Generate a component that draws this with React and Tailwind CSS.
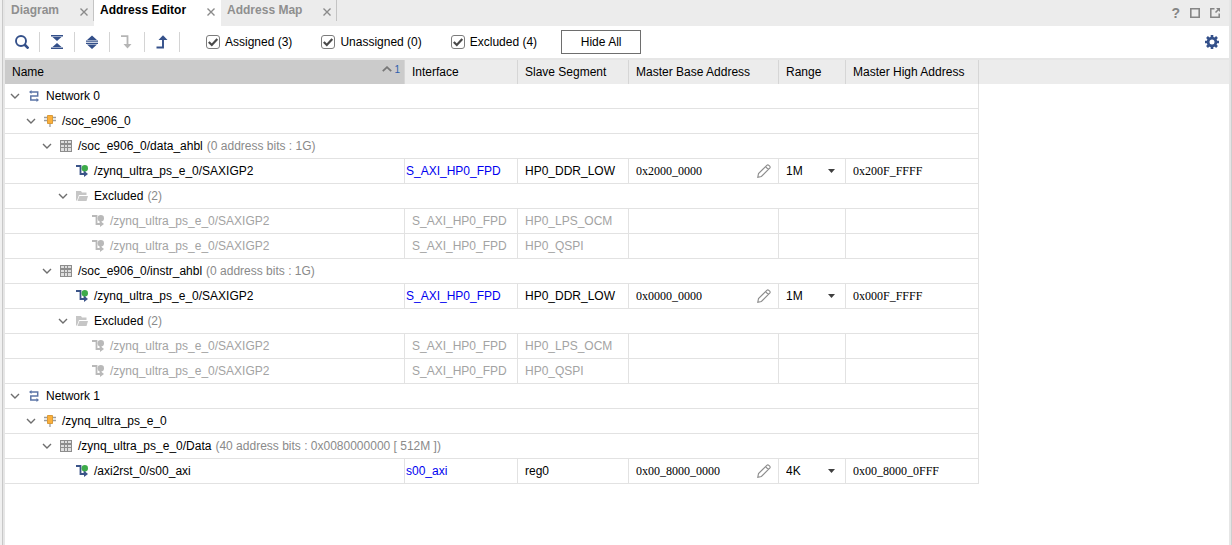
import { useState } from "react";

const PAD = ["pl-[5px]", "pl-[21px]", "pl-[37px]", "pl-[53px]", "pl-[69px]"];

const ROWS = [
  { level: 0, icon: "network", name: "Network 0", group: true },
  { level: 1, icon: "chip", name: "/soc_e906_0", group: true },
  { level: 2, icon: "grid", name: "/soc_e906_0/data_ahbl", note: "(0 address bits : 1G)", group: true },
  { level: 3, icon: "port", name: "/zynq_ultra_ps_e_0/SAXIGP2", iface: "S_AXI_HP0_FPD", seg: "HP0_DDR_LOW", base: "0x2000_0000", range: "1M", high: "0x200F_FFFF" },
  { level: 3, icon: "folder", name: "Excluded", note: "(2)", group: true },
  { level: 4, icon: "port", name: "/zynq_ultra_ps_e_0/SAXIGP2", iface: "S_AXI_HP0_FPD", seg: "HP0_LPS_OCM", excluded: true },
  { level: 4, icon: "port", name: "/zynq_ultra_ps_e_0/SAXIGP2", iface: "S_AXI_HP0_FPD", seg: "HP0_QSPI", excluded: true },
  { level: 2, icon: "grid", name: "/soc_e906_0/instr_ahbl", note: "(0 address bits : 1G)", group: true },
  { level: 3, icon: "port", name: "/zynq_ultra_ps_e_0/SAXIGP2", iface: "S_AXI_HP0_FPD", seg: "HP0_DDR_LOW", base: "0x0000_0000", range: "1M", high: "0x000F_FFFF" },
  { level: 3, icon: "folder", name: "Excluded", note: "(2)", group: true },
  { level: 4, icon: "port", name: "/zynq_ultra_ps_e_0/SAXIGP2", iface: "S_AXI_HP0_FPD", seg: "HP0_LPS_OCM", excluded: true },
  { level: 4, icon: "port", name: "/zynq_ultra_ps_e_0/SAXIGP2", iface: "S_AXI_HP0_FPD", seg: "HP0_QSPI", excluded: true },
  { level: 0, icon: "network", name: "Network 1", group: true },
  { level: 1, icon: "chip", name: "/zynq_ultra_ps_e_0", group: true },
  { level: 2, icon: "grid", name: "/zynq_ultra_ps_e_0/Data", note: "(40 address bits : 0x0080000000 [ 512M ])", group: true },
  { level: 3, icon: "port", name: "/axi2rst_0/s00_axi", iface: "s00_axi", seg: "reg0", base: "0x00_8000_0000", range: "4K", high: "0x00_8000_0FFF" },
];

function RowIcon({ kind, muted }) {
  const line = muted ? "#b9b9b9" : "#3a5388";
  return (
    <svg className="size-3 shrink-0" viewBox="0 0 12 12" fill="none" aria-hidden="true">
      {kind === "network" && (
        <g stroke="#5b74a6" strokeWidth="1.500">
          <path d="M2 2h7.700v4H2.800v4H9" />
          <path d="M3.500 0 1 2l2.500 2zM8.500 8l2.500 2-2.500 2z" fill="#5b74a6" stroke="none" />
        </g>
      )}
      {kind === "chip" && (
        <g>
          <path d="M0 2.500h12M0 5.500h12M6 8v4" stroke="#9c9c9c" strokeWidth="1.300" />
          <path d="M3.500.5h5v8h-5z" fill="#fbb03b" stroke="#d99a3a" />
        </g>
      )}
      {kind === "grid" && (
        <g>
          <path d="M0 0h12v12H0z" fill="#8d8d8d" />
          <path d="M1 1h3v2H1zM5 1h2v2H5zM8 1h3v2H8zM1 5h3v2H1zM5 5h2v2H5zM8 5h3v2H8zM1 8h3v3H1zM5 8h2v3H5zM8 8h3v3H8z" fill="#dedede" />
        </g>
      )}
      {kind === "port" && (
        <g>
          <path d="M0 1h4.500v8H10M8.500 5v4" stroke={line} strokeWidth="1.800" />
          <path d="M8 5.800 12 9l-4 3z" fill={line} />
          <circle cx="8.800" cy="3.200" r="3.200" fill={muted ? "#b9b9b9" : "#3dab49"} />
        </g>
      )}
      {kind === "folder" && (
        <g fill="#c6c6c6">
          <path d="M0 1h5l1 1.500h4.500V5H3L1 10.500H0z" />
          <path d="M3.400 6H12l-1.500 5H1.600z" />
        </g>
      )}
    </svg>
  );
}

function Chevron({ closed }) {
  return (
    <svg className={closed ? "size-[10px] -rotate-90" : "size-[10px]"} viewBox="0 0 10 10" fill="none" aria-hidden="true">
      <path d="m1 3 4 4 4-4" stroke="#6e6e6e" strokeWidth="1.400" />
    </svg>
  );
}

function Tab({ label, active }) {
  return (
    <div className={"flex items-start border-r pl-1.5 pr-[5px] " + (active ? "h-[26px] border-white bg-white" : "h-[21px] border-[#c4c4c4]")}>
      <button type="button" className={"h-5 font-bold " + (active ? "text-black" : "text-[#8f8f8f]")}>{label}</button>
      <button type="button" aria-label={"Close " + label} className="ml-[21px] mt-2 flex">
        <svg className="size-2" viewBox="0 0 8 8" aria-hidden="true">
          <path d="m.5.500 7 7m0-7-7 7" stroke="#8a8a8a" strokeWidth="1.400" />
        </svg>
      </button>
    </div>
  );
}

function Tool({ label, children, disabled }) {
  return (
    <button type="button" aria-label={label} disabled={disabled} className="flex h-5 w-[35px] items-center justify-center border-r border-[#d4d4d4]">
      <svg className="size-[14px]" viewBox="0 0 14 14" fill="none" aria-hidden="true">{children}</svg>
    </button>
  );
}

function Check({ label }) {
  return (
    <label className="flex items-center gap-[5px] whitespace-nowrap">
      <span className="grid size-[14px]">
        <input type="checkbox" defaultChecked className="peer col-start-1 row-start-1 size-[14px] appearance-none rounded-[3px] border border-[#7c7c7c] bg-white" />
        <svg className="pointer-events-none invisible col-start-1 row-start-1 size-[14px] peer-checked:visible" viewBox="0 0 14 14" fill="none" aria-hidden="true">
          <path d="m2.800 7 3 3L11.300 4" stroke="#4a4a4a" strokeWidth="2.200" />
        </svg>
      </span>
      {label}
    </label>
  );
}

function BaseAddress({ value, name }) {
  return (
    <div className="flex items-center pr-[7px]">
      <input aria-label={"Master base address of " + name} defaultValue={value} className="min-w-0 flex-1 bg-transparent font-['Liberation_Serif',serif] outline-none" />
      <button type="button" aria-label="Edit address">
        <svg className="block size-[14px]" viewBox="0 0 14 14" fill="none" stroke="#8c8c8c" strokeWidth="1.100" aria-hidden="true">
          <path d="M.8 13.200 1.500 9.600 9.800 1.300q1-.9 2 0l.9.9q.9 1 0 2L4.400 12.500zM8.500 2.600l2.900 2.900" />
        </svg>
      </button>
    </div>
  );
}

function RangeSelect({ value, name }) {
  return (
    <div className="grid items-center">
      <select aria-label={"Range of " + name} defaultValue={value} className="col-start-1 row-start-1 w-full appearance-none bg-transparent outline-none">
        <option>4K</option>
        <option>1M</option>
      </select>
      <svg className="pointer-events-none col-start-1 row-start-1 mr-[10px] h-1 w-[7px] justify-self-end" viewBox="0 0 7 4" aria-hidden="true">
        <path d="M0 0h7L3.500 4z" fill="#3f3f3f" />
      </svg>
    </div>
  );
}

const line = "border-b border-r border-[#e2e2e2] p-0";

export default function App() {
  const [closed, setClosed] = useState([]);
  const toggle = (i) => setClosed((c) => (c.includes(i) ? c.filter((n) => n !== i) : [...c, i]));

  let hiddenBelow = Infinity;
  const visible = [];
  ROWS.forEach((row, i) => {
    if (row.level > hiddenBelow) return;
    hiddenBelow = closed.includes(i) ? row.level : Infinity;
    visible.push({ ...row, i });
  });

  return (
    <div className="flex min-h-screen border-r border-[#cfcfcf] bg-[#f0f0f0] pl-0.5 font-['Liberation_Sans',Arial,sans-serif] text-[12px] leading-5 text-black">
      <div className="flex min-w-0 flex-1 flex-col border-l border-[#c8c8c8] bg-[#e6e6e6] px-0.5">
        <header className="flex h-[26px] justify-between bg-[#ececec]">
          <nav className="flex items-start">
            <Tab label="Diagram" />
            <Tab label="Address Editor" active />
            <Tab label="Address Map" />
          </nav>
          <div className="flex items-center gap-2.5 pr-[9px]">
            <button type="button" aria-label="Help" className="text-[14px] font-bold text-[#858585]">?</button>
            <button type="button" aria-label="Maximize">
              <svg className="block size-[10px]" viewBox="0 0 10 10" fill="none" aria-hidden="true">
                <path d="M.8.800h8.400v8.400H.8z" stroke="#858585" strokeWidth="1.600" />
              </svg>
            </button>
            <button type="button" aria-label="Float">
              <svg className="block size-[10px]" viewBox="0 0 10 10" fill="none" stroke="#858585" strokeWidth="1.500" aria-hidden="true">
                <path d="M4.500.800H.8v8.400h8.400V5.500M5.500 4.500l3-3" />
                <path d="M6 0h4v4z" fill="#858585" stroke="none" />
              </svg>
            </button>
          </div>
        </header>

        <div className="flex h-8 items-center bg-white pr-2.5">
          <Tool label="Search">
            <circle cx="6" cy="6" r="5" stroke="#34508a" strokeWidth="1.900" />
            <path d="m9.500 9.500 4 4" stroke="#34508a" strokeWidth="2.600" />
          </Tool>
          <Tool label="Collapse all">
            <path d="M1 0h12v1.600H1zM2.500 2h9L7 6zM1 12.400h12V14H1zM2.500 12h9L7 8z" fill="#34508a" />
          </Tool>
          <Tool label="Expand all">
            <path d="M7 .5 12 5H2zM1 5.500h12v1.200H1zM1 7.800h12V9H1zM2 9.500h10L7 14z" fill="#34508a" />
          </Tool>
          <Tool label="Assign" disabled>
            <path d="M1 1.200h6.500V10" stroke="#b5b5b5" strokeWidth="1.800" />
            <path d="M3.500 9h8l-4 4.500z" fill="#b5b5b5" />
          </Tool>
          <Tool label="Unassign">
            <path d="M1.500 12.500H8V4" stroke="#34508a" strokeWidth="1.900" />
            <path d="M3.500 5h9L8 .2z" fill="#34508a" />
          </Tool>
          <div className="ml-[26px] flex items-center gap-[29px]">
            <Check label="Assigned (3)" />
            <Check label="Unassigned (0)" />
            <Check label="Excluded (4)" />
          </div>
          <button type="button" className="ml-[24px] h-6 w-20 border border-[#6e6e6e] bg-white">Hide All</button>
          <button type="button" aria-label="Settings" className="ml-auto">
            <svg className="block size-[14px]" viewBox="0 0 14 14" fill="none" aria-hidden="true">
              <circle cx="7" cy="7" r="3.900" stroke="#34508a" strokeWidth="2.800" />
              <path d="M7 0v3M7 11v3M0 7h3M11 7h3M2 2l2 2M10 10l2 2M12 2l-2 2M4 10l-2 2" stroke="#34508a" strokeWidth="2.600" />
            </svg>
          </button>
        </div>

        <main className="mt-0.5 flex-1 bg-white">
          <table className="w-full table-fixed border-separate border-spacing-0 text-left">
            <colgroup>
              <col className="w-[400px]" />
              <col className="w-[113px]" />
              <col className="w-[111px]" />
              <col className="w-[150px]" />
              <col className="w-[67px]" />
              <col className="w-[133px]" />
              <col />
            </colgroup>
            <thead>
              <tr className="h-6 bg-[#ececec] *:border-[#d6d6d6] *:py-0 *:pl-[7px] *:pr-0 *:font-normal">
                <th className="border-r bg-[#cbcbcb]">
                  <div className="flex items-center justify-between pr-1">
                    Name
                    <span className="flex items-start gap-0.5 pb-1 text-[10px] leading-4 text-[#2f5fae]">
                      <svg className="mt-1 h-1.5 w-[10px]" viewBox="0 0 10 6" fill="none" aria-hidden="true">
                        <path d="m.8 5.200 4.200-4 4.200 4" stroke="#777" strokeWidth="1.800" />
                      </svg>
                      1
                    </span>
                  </div>
                </th>
                <th className="border-r">Interface</th>
                <th className="border-r">Slave Segment</th>
                <th className="border-r">Master Base Address</th>
                <th className="border-r">Range</th>
                <th className="border-r">Master High Address</th>
                <td />
              </tr>
            </thead>
            <tbody>
              {visible.map((row) => {
                const name = (
                  <div className={"flex items-center whitespace-nowrap " + PAD[row.level]}>
                    {row.group ? (
                      <button type="button" aria-label={"Toggle " + row.name} aria-expanded={!closed.includes(row.i)} onClick={() => toggle(row.i)}>
                        <Chevron closed={closed.includes(row.i)} />
                      </button>
                    ) : (
                      <span className="w-[10px]" />
                    )}
                    <span className="ml-2 mr-1.5 flex">
                      <RowIcon kind={row.icon} muted={row.excluded} />
                    </span>
                    <span>{row.name}</span>
                    {row.note && <span className="ml-1 text-[#8a8a8a]">{row.note}</span>}
                  </div>
                );
                if (row.group) {
                  return (
                    <tr key={row.i} className="h-[25px]">
                      <td colSpan={6} className={line}>{name}</td>
                      <td className="p-0" />
                    </tr>
                  );
                }
                return (
                  <tr key={row.i} className={"h-[25px] " + (row.excluded ? "text-[#a3a3a3]" : "")}>
                    <td className={line}>{name}</td>
                    <td className={line}>
                      {row.excluded ? <span className="pl-[7px]">{row.iface}</span> : <a href="#interface" className="pl-px text-[#0000f0]">{row.iface}</a>}
                    </td>
                    <td className={line}><span className="pl-[7px]">{row.seg}</span></td>
                    <td className={line}>{row.base && <div className="pl-[7px]"><BaseAddress value={row.base} name={row.name} /></div>}</td>
                    <td className={line}>{row.range && <div className="pl-[7px]"><RangeSelect value={row.range} name={row.name} /></div>}</td>
                    <td className={line}><span className="block pl-[7px] font-['Liberation_Serif',serif]">{row.high}</span></td>
                    <td className="p-0" />
                  </tr>
                );
              })}
            </tbody>
          </table>
        </main>
      </div>
    </div>
  );
}
